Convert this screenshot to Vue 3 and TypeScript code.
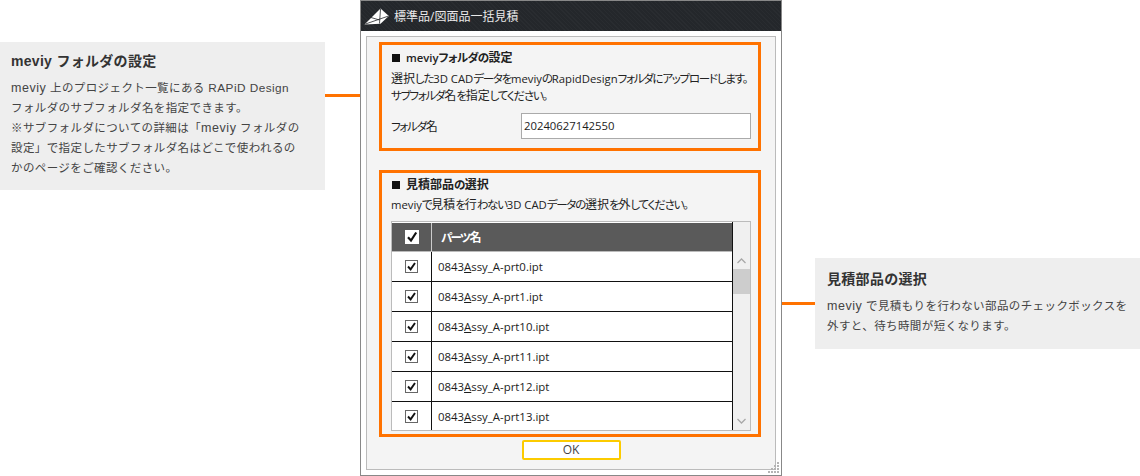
<script setup lang="ts">
interface Run { t: string; c: string }

const rows: string[] = ['prt0', 'prt1', 'prt10', 'prt11', 'prt12', 'prt13']

// The reference's UI font has narrow kana and compact Latin, so runs are sized by script.
function runs(text: string): Run[] {
  return text
    .split(/([ぁ-ゖァ-ヺー。、]+|[A-Za-z0-9 _.\-]+)/)
    .filter((t) => t.length > 0)
    .map((t) => ({
      t,
      c: /^[ぁ-ゖァ-ヺー。、]/.test(t) ? 'kana' : /^[A-Za-z0-9 _.\-]/.test(t) ? 'lat' : 'han',
    }))
}

const folderTitle = runs('meviyフォルダの設定')
const folderDesc1 = runs('選択した3D CADデータをmeviyのRapidDesignフォルダにアップロードします。')
const folderDesc2 = runs('サブフォルダ名を指定してください。')
const folderLabel = runs('フォルダ名')
const partsTitle = runs('見積部品の選択')
const partsDesc = runs('meviyで見積を行わない3D CADデータの選択を外してください。')
const colName = runs('パーツ名')

const noteRuns = (text: string): Run[] =>
  text
    .split(/([A-Za-z]+(?: [A-Za-z]+)*)/)
    .filter((t) => t.length > 0)
    .map((t) => ({ t, c: /^RAPiD/.test(t) ? 'nlat small' : /^[A-Za-z]/.test(t) ? 'nlat' : 'ncjk' }))

const leftLines = [
  'meviy 上のプロジェクト一覧にある RAPiD Design',
  'フォルダのサブフォルダ名を指定できます。',
  '※サブフォルダについての詳細は「meviy フォルダの',
  '設定」で指定したサブフォルダ名はどこで使われるの',
  'かのページをご確認ください。',
].map(noteRuns)
const rightLines = [
  'meviy で見積もりを行わない部品のチェックボックスを',
  '外すと、待ち時間が短くなります。',
].map(noteRuns)
</script>

<template>
  <div class="page">
    <aside class="note note-left">
      <h3>meviy フォルダの設定</h3>
      <p v-for="(line, i) in leftLines" :key="i"><span v-for="(r, j) in line" :key="j" :class="r.c">{{ r.t }}</span></p>
    </aside>

    <section class="window">
      <header class="titlebar">
        <svg class="logo" width="26" height="18" viewBox="0 0 26 18">
          <path d="M0.5 16.5 16.5 0.5 24.8 8 16.5 15.8Z" fill="#fff" />
          <path d="M1.5 16 24 8.2M16.5 1 15.5 15.5M7 9.5 15.5 12" stroke="#23262a" stroke-width="0.8" fill="none" />
        </svg>
        <span>標準品/図面品一括見積</span>
      </header>
      <div class="body">
        <div class="panel">
          <div class="box box-folder">
            <h4><span class="sq"></span><span v-for="(r, j) in folderTitle" :key="j" :class="r.c">{{ r.t }}</span></h4>
            <p class="desc">
              <span class="line"><span v-for="(r, j) in folderDesc1" :key="j" :class="r.c">{{ r.t }}</span></span>
              <span class="line"><span v-for="(r, j) in folderDesc2" :key="j" :class="r.c">{{ r.t }}</span></span>
            </p>
            <div class="field">
              <label><span v-for="(r, j) in folderLabel" :key="j" :class="r.c">{{ r.t }}</span></label>
              <div class="input">20240627142550</div>
            </div>
          </div>

          <div class="box box-parts">
            <h4><span class="sq"></span><span v-for="(r, j) in partsTitle" :key="j" :class="r.c">{{ r.t }}</span></h4>
            <p class="desc">
              <span class="line"><span v-for="(r, j) in partsDesc" :key="j" :class="r.c">{{ r.t }}</span></span>
            </p>
            <div class="table">
              <div class="table-main">
                <div class="thead">
                  <div class="c-check">
                    <svg width="14" height="14" viewBox="0 0 14 14">
                      <rect x="0" y="0" width="14" height="14" fill="#fff" />
                      <path d="M3 7.2 6 10.5 11.2 2.5" stroke="#111" stroke-width="2.2" fill="none" />
                    </svg>
                  </div>
                  <div class="c-name"><span v-for="(r, j) in colName" :key="j" :class="r.c">{{ r.t }}</span></div>
                </div>
                <div v-for="r in rows" :key="r" class="row">
                  <div class="c-check">
                    <svg width="13" height="13" viewBox="0 0 13 13">
                      <rect x="0.5" y="0.5" width="12" height="12" fill="#fff" stroke="#666" />
                      <path d="M3 6.5 5.6 9.4 10 3" stroke="#111" stroke-width="1.9" fill="none" />
                    </svg>
                  </div>
                  <div class="c-name">0843<u>A</u>ssy_A-{{ r }}.ipt</div>
                </div>
              </div>
              <div class="scroll">
                <svg class="arrow" width="9" height="6" viewBox="0 0 9 6"><path d="M0.5 5 4.5 1 8.5 5" stroke="#a8a8a8" stroke-width="1.3" fill="none" /></svg>
                <div class="thumb"></div>
                <svg class="arrow arrow-down" width="9" height="6" viewBox="0 0 9 6"><path d="M0.5 1 4.5 5 8.5 1" stroke="#a8a8a8" stroke-width="1.3" fill="none" /></svg>
              </div>
            </div>
          </div>

          <div class="actions"><button type="button">OK</button></div>
        </div>
        <svg class="grip" width="12" height="12" viewBox="0 0 12 12" fill="#b4b4b4">
          <rect x="9" y="0" width="2" height="2" /><rect x="6" y="3" width="2" height="2" /><rect x="9" y="3" width="2" height="2" />
          <rect x="3" y="6" width="2" height="2" /><rect x="6" y="6" width="2" height="2" /><rect x="9" y="6" width="2" height="2" />
          <rect x="0" y="9" width="2" height="2" /><rect x="3" y="9" width="2" height="2" /><rect x="6" y="9" width="2" height="2" /><rect x="9" y="9" width="2" height="2" />
        </svg>
      </div>
    </section>

    <aside class="note note-right">
      <h3>見積部品の選択</h3>
      <p v-for="(line, i) in rightLines" :key="i"><span v-for="(r, j) in line" :key="j" :class="r.c">{{ r.t }}</span></p>
    </aside>
  </div>
</template>

<style>
html, body { margin: 0; background: #fff; overflow: hidden; }
</style>

<style scoped>
.page {
  position: relative;
  width: 1140px;
  height: 476px;
  display: flex;
  justify-content: space-between;
  align-items: flex-start;
  overflow: hidden;
  font-family: "Open Sans", "Noto Sans CJK JP", sans-serif;
  color: #1c1c1c;
}
h3, h4, p { margin: 0; font-weight: 400; }

.note {
  position: relative;
  width: 325px;
  box-sizing: border-box;
  background: #eee;
  color: #444;
  font-family: "Liberation Sans", "Noto Sans CJK JP", sans-serif;
  font-size: 11.5px;
  line-height: 20px;
  white-space: nowrap;
}
.ncjk { letter-spacing: 0.4px; }
.nlat { font-size: 12.5px; letter-spacing: 0.55px; }
.nlat.small { font-size: 11.8px; letter-spacing: 0.45px; }
.note h3 {
  font-size: 14px;
  font-weight: 700;
  line-height: 20px;
  color: #333;
  letter-spacing: 0.3px;
  margin-bottom: 7px;
}
.note-left { margin-top: 42px; height: 148px; padding: 9px 12px 0 11px; }
.note-right { margin-top: 258px; height: 91px; padding: 11px 12px 0 12px; }
.note-left::after, .note-right::after {
  content: "";
  position: absolute;
  height: 3px;
  background: #ff7200;
}
.note-left::after { left: 325px; top: 52px; width: 54px; }
.note-right::after { right: 325px; top: 44px; width: 54px; }

.window {
  position: relative;
  z-index: 1;
  width: 422px;
  height: 476px;
  box-sizing: border-box;
  margin-left: 35px;
  margin-right: 33px;
  border: 1px solid #888;
  background: #fff;
  display: flex;
  flex-direction: column;
  font-family: "Open Sans", "Noto Sans CJK JP", sans-serif;
}
.titlebar {
  height: 30px;
  flex: none;
  background-color: #24272b;
  background-image: repeating-linear-gradient(45deg, rgba(255, 255, 255, 0.025) 0 1px, transparent 1px 3px);
  color: #e9e9e9;
  display: flex;
  align-items: center;
  font-size: 12px;
  padding-left: 3px;
  gap: 4px;
}
.logo { flex: none; margin-top: 1px; }
.body { flex: 1; padding: 5px; position: relative; display: flex; min-height: 0; }
.panel {
  flex: 1;
  box-sizing: border-box;
  border: 1px solid #bbb;
  background: #f4f4f4;
  padding: 5px 14px 0 12px;
  display: flex;
  flex-direction: column;
}
.box {
  border: 3px solid #ff7200;
  box-sizing: border-box;
  padding: 3px 7px 0 9px;
}
.box-folder { height: 109px; margin-bottom: 19px; }
.box-parts { height: 267px; padding-top: 2px; }
.box-parts .desc { margin-top: 1px; }
.box h4 {
  font-size: 12px;
  font-weight: 600;
  line-height: 20px;
  display: flex;
  align-items: center;
  color: #222;
}
.sq { width: 8px; height: 8px; background: #111; margin: 0 6px 0 1px; display: inline-block; }
.desc { font-size: 12px; margin-top: 2px; color: #222; }
.line { display: block; line-height: 17px; height: 17px; white-space: nowrap; }
.kana { font-size: 11.5px; letter-spacing: -1.25px; font-feature-settings: "palt"; }
.lat { font-size: 11.3px; }
h4 .kana { letter-spacing: -0.7px; }
.field { display: flex; align-items: center; margin-top: 9px; }
.field label { width: 130px; font-size: 12px; }
.input {
  width: 230px;
  height: 26px;
  box-sizing: border-box;
  border: 1px solid #aaa;
  background: #fff;
  padding-left: 2px;
  font-size: 11.3px;
  line-height: 24px;
}
.table {
  margin-top: 8px;
  height: 210px;
  box-sizing: border-box;
  border: 1px solid #bbb;
  display: flex;
  overflow: hidden;
  width: 360px;
}
.table-main { width: 340px; flex: none; overflow: hidden; border-right: 1px solid #111; background: #fff; }
.thead {
  height: 28px;
  margin-top: 1px;
  background: #5a5a5a;
  color: #fff;
  display: flex;
  font-size: 12px;
  font-weight: 700;
  border-bottom: 1px solid #bbb;
}
.thead .kana { letter-spacing: -1.6px; }
.thead .c-check { border-right: 1px solid #ccc; }
.thead .c-name { padding-left: 9px; }
.row {
  height: 30px;
  box-sizing: border-box;
  display: flex;
  border-bottom: 1px solid #111;
  font-size: 11.4px;
}
.c-check {
  width: 40px;
  flex: none;
  display: flex;
  align-items: center;
  justify-content: center;
  box-sizing: border-box;
  border-right: 1px solid #111;
}
.c-name { flex: 1; display: flex; align-items: center; padding-left: 6px; white-space: pre; }
.c-name u { text-decoration: underline; }
.scroll {
  flex: 1;
  background: #f0f0f0;
  position: relative;
  display: flex;
  flex-direction: column;
  align-items: center;
}
.arrow { margin-top: 36px; flex: none; }
.thumb { width: 100%; height: 25px; background: #cdcdcd; margin-top: 5px; flex: none; }
.arrow-down { margin-top: auto; margin-bottom: 6px; }
.actions { display: flex; justify-content: center; margin-top: 3px; padding-left: 2px; }
.actions button {
  width: 99px;
  height: 20px;
  box-sizing: border-box;
  border: 2px solid #fccb00;
  border-radius: 2px;
  background: #fff;
  font: inherit;
  font-size: 12px;
  line-height: 16px;
  padding: 0;
  color: #444;
}
.grip { position: absolute; right: 1px; bottom: 1px; }
</style>
